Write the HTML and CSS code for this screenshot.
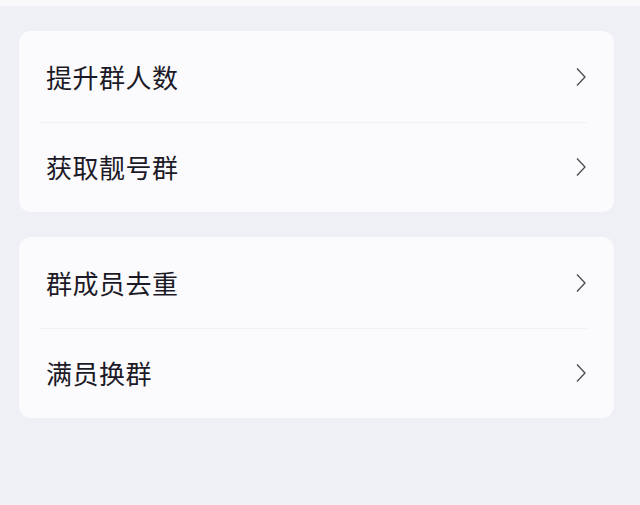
FILE: index.html
```html
<!DOCTYPE html>
<html lang="zh-CN">
<head>
    <meta charset="UTF-8">
    <meta name="viewport" content="width=device-width, initial-scale=1.0">
    <title>群管理</title>
    <link rel="stylesheet" href="styles.css">
</head>
<body>
    <div class="top-strip"></div>

    <div class="page">
        <div class="card">
            <div class="row">
                <span class="label">提升群人数</span>
                <svg class="chevron" viewBox="0 0 10 20"><path d="M1 1.5 L9 10 L1 18.5"/></svg>
            </div>
            <div class="row">
                <span class="label">获取靓号群</span>
                <svg class="chevron" viewBox="0 0 10 20"><path d="M1 1.5 L9 10 L1 18.5"/></svg>
            </div>
        </div>

        <div class="card">
            <div class="row">
                <span class="label">群成员去重</span>
                <svg class="chevron" viewBox="0 0 10 20"><path d="M1 1.5 L9 10 L1 18.5"/></svg>
            </div>
            <div class="row">
                <span class="label">满员换群</span>
                <svg class="chevron" viewBox="0 0 10 20"><path d="M1 1.5 L9 10 L1 18.5"/></svg>
            </div>
        </div>
    </div>
</body>
</html>
```

FILE: styles.css
```css
body {
    margin: 0;
    background-color: #eff0f5;
    font-family: "Noto Sans CJK SC", "Noto Sans", sans-serif;
    color: #1d1a28;
}

.top-strip {
    height: 6px;
    background-color: #f9f9fb;
}

.page {
    padding: 25px 26px 0 19px;
    display: flex;
    flex-direction: column;
    gap: 25px;
}

.card {
    background-color: #fbfbfd;
    border-radius: 12px;
}

.row {
    position: relative;
    height: 90px;
    display: flex;
    align-items: center;
    justify-content: space-between;
    padding: 0 28px 0 27px;
}

.row:first-child {
    height: 91px;
}

.row + .row::before {
    content: "";
    position: absolute;
    top: 0;
    left: 21px;
    right: 27px;
    height: 1px;
    background-color: #f0f1f4;
}

.label {
    font-size: 26px;
    line-height: 1;
    letter-spacing: 0.5px;
}

.chevron {
    width: 10px;
    height: 20px;
}

.chevron path {
    fill: none;
    stroke: #4a4950;
    stroke-width: 1.3;
}
```
